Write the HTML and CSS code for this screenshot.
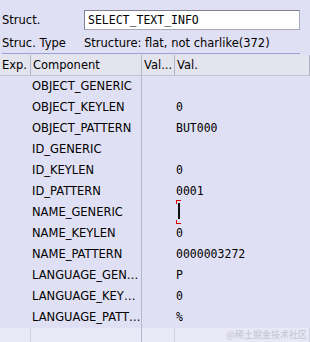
FILE: index.html
```html
<!DOCTYPE html>
<html lang="en">
<head>
    <meta charset="UTF-8">
    <title>Structure editor</title>
    <link rel="stylesheet" href="styles.css">
</head>
<body>
    <div class="head">
        <div class="field-row">
            <span class="label">Struct.</span>
            <span class="input">SELECT_TEXT_INFO</span>
        </div>
        <div class="field-row type-row">
            <span class="label">Struc. Type</span>
            <span class="info">Structure: flat, not charlike(372)</span>
        </div>
    </div>

    <div class="grid">
        <div class="hcell">Exp.</div>
        <div class="hcell">Component</div>
        <div class="hcell">Val...</div>
        <div class="hcell">Val.</div>

        <div class="cell"></div><div class="cell comp">OBJECT_GENERIC</div><div class="cell"></div><div class="cell val"></div>
        <div class="cell"></div><div class="cell comp">OBJECT_KEYLEN</div><div class="cell"></div><div class="cell val">0</div>
        <div class="cell"></div><div class="cell comp">OBJECT_PATTERN</div><div class="cell"></div><div class="cell val">BUT000</div>
        <div class="cell"></div><div class="cell comp">ID_GENERIC</div><div class="cell"></div><div class="cell val"></div>
        <div class="cell"></div><div class="cell comp">ID_KEYLEN</div><div class="cell"></div><div class="cell val">0</div>
        <div class="cell"></div><div class="cell comp">ID_PATTERN</div><div class="cell"></div><div class="cell val">0001</div>
        <div class="cell"></div><div class="cell comp">NAME_GENERIC</div><div class="cell"></div><div class="cell val"><span class="caret"><span class="bar"></span></span></div>
        <div class="cell"></div><div class="cell comp">NAME_KEYLEN</div><div class="cell"></div><div class="cell val">0</div>
        <div class="cell"></div><div class="cell comp">NAME_PATTERN</div><div class="cell"></div><div class="cell val">0000003272</div>
        <div class="cell"></div><div class="cell comp">LANGUAGE_GENERIC</div><div class="cell"></div><div class="cell val">P</div>
        <div class="cell"></div><div class="cell comp">LANGUAGE_KEYLEN</div><div class="cell"></div><div class="cell val">0</div>
        <div class="cell"></div><div class="cell comp">LANGUAGE_PATTERN</div><div class="cell"></div><div class="cell val">%</div>

        <div class="cell empty"></div><div class="cell empty"></div><div class="cell empty"></div><div class="cell empty"></div>
    </div>

    <span class="mark">@稀土掘金技术社区</span>
</body>
</html>
```

FILE: styles.css
```css
html {
    height: 342px;
    overflow: hidden;
}

body {
    margin: 0;
    background-color: #e0e0f4;
    font-family: 'DejaVu Sans', sans-serif;
    font-size: 11.5px;
    color: #000000;
    overflow: hidden;
    position: relative;
    height: 342px;
}

.head {
    padding: 9px 10px 0 2px;
}

.field-row {
    display: flex;
    align-items: center;
    height: 21px;
}

.label {
    width: 82px;
    flex: none;
}

.input {
    flex: 1;
    height: 18px;
    line-height: 18px;
    padding-left: 3px;
    background-color: #ffffff;
    border: 1px solid #a8a8b8;
    border-top-color: #808090;
    border-left-color: #808090;
    font-family: 'DejaVu Sans Mono', monospace;
    font-size: 11.5px;
}

.type-row {
    height: 21px;
    margin-top: 2px;
    border-bottom: 1px solid #a0a0d4;
}

.grid {
    display: grid;
    grid-template-columns: 31px 111px 33px 1fr;
    grid-template-rows: 21px repeat(12, 21px) 30px;
    margin-top: 1px;
}

.hcell {
    background-color: #e4e4ee;
    border-right: 1px solid #b4b4c8;
    border-bottom: 1px solid #c4c4d4;
    padding-left: 2px;
    line-height: 20px;
    white-space: nowrap;
    overflow: hidden;
}

.cell {
    line-height: 21px;
    white-space: nowrap;
    overflow: hidden;
}

.comp {
    padding-left: 1px;
    text-overflow: ellipsis;
    border-right: 1px solid #b8b8cc;
}

.val {
    padding-left: 1px;
    font-family: 'DejaVu Sans Mono', monospace;
    font-size: 11.5px;
    overflow: visible;
}

.empty {
    background-color: #e8e8f6;
    border-right: 1px solid #d0d0e0;
}

.empty:nth-child(4n+2) {
    border-right-color: #b8b8cc;
}

/* kurzor v poli hodnoty */
.caret {
    display: inline-block;
    position: relative;
    width: 5px;
    height: 24px;
    vertical-align: top;
    margin-top: -2px;
}

.caret::before,
.caret::after {
    content: '';
    position: absolute;
    left: 0;
    width: 4px;
    height: 3px;
    border-left: 1px solid #e00000;
}

.caret::before {
    top: 0;
    border-top: 1px solid #e00000;
}

.caret::after {
    bottom: 0;
    border-bottom: 1px solid #e00000;
}

.bar {
    position: absolute;
    left: 2px;
    top: 3px;
    width: 2px;
    height: 16px;
    background-color: #101010;
}

.mark {
    position: absolute;
    right: 3px;
    bottom: 1px;
    font-family: 'Noto Sans CJK SC', sans-serif;
    font-size: 9px;
    color: #c4c4d0;
}
```
